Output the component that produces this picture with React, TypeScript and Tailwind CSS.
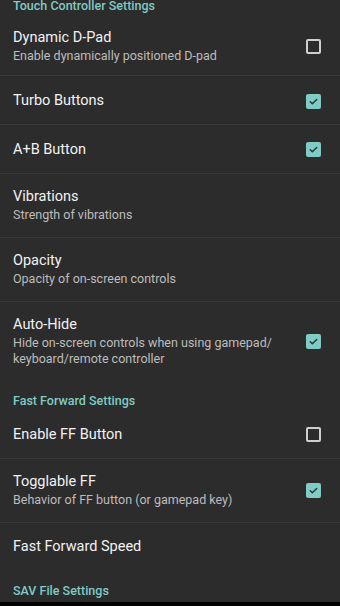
import React from "react";

const font = { fontFamily: "Roboto, 'Noto Sans', sans-serif" };

function Check({ checked }: { checked: boolean }) {
  if (checked) {
    return (
      <div className="w-[15px] h-[15px] rounded-[2px] bg-[#80cbc4] flex items-center justify-center">
        <svg width="11" height="11" viewBox="0 0 24 24" fill="none">
          <path d="M5 12.5l4.5 4.5L19 7.5" stroke="#263238" strokeWidth="3" strokeLinecap="round" strokeLinejoin="round" />
        </svg>
      </div>
    );
  }
  return <div className="w-[15px] h-[15px] rounded-[2px] border-[2.5px] border-[#cfcfcf]" />;
}

function Header({ text, first }: { text: string; first?: boolean }) {
  return (
    <div className={first ? "h-[13px] px-[13px] flex items-end" : "pt-[13px] pb-[2px] px-[13px]"}>
      <div className="text-[12.5px] leading-[14px] font-medium text-[#80cbc4] whitespace-nowrap">{text}</div>
    </div>
  );
}

function Row({
  title,
  sub,
  check,
  h,
  divider = true,
}: {
  title: string;
  sub?: string[];
  check?: boolean;
  h: string;
  divider?: boolean;
}) {
  return (
    <div className={divider ? "border-b border-[#383838]" : ""}>
      <div className={`${h} flex items-center pl-[13px] pr-[19px]`}>
        <div className="flex-1 min-w-0">
          <div className="text-[14.5px] leading-[18px] text-[#f2f2f2]">{title}</div>
          {sub && (
            <div className="mt-[1px]">
              {sub.map((s) => (
                <div key={s} className="text-[12.5px] leading-[16px] text-[#bdbdbd] whitespace-nowrap">
                  {s}
                </div>
              ))}
            </div>
          )}
        </div>
        {check !== undefined && (
          <div className="ml-3 shrink-0">
            <Check checked={check} />
          </div>
        )}
      </div>
    </div>
  );
}

export default function App() {
  return (
    <div className="w-[340px] h-[606px] bg-black flex flex-col" style={font}>
      <div className="h-[602px] overflow-hidden bg-[#2c2c2c]">
        <Header text="Touch Controller Settings" first />
        <Row title="Dynamic D-Pad" sub={["Enable dynamically positioned D-pad"]} check={false} h="h-[62px] pt-[5px]" />
        <Row title="Turbo Buttons" check={true} h="h-[48px] pt-[2px]" />
        <Row title="A+B Button" check={true} h="h-[48px] pt-[1px]" />
        <Row title="Vibrations" sub={["Strength of vibrations"]} h="h-[63px]" />
        <Row title="Opacity" sub={["Opacity of on-screen controls"]} h="h-[63px]" />
        <Row
          title="Auto-Hide"
          sub={["Hide on-screen controls when using gamepad/", "keyboard/remote controller"]}
          check={true}
          h="h-[79px]"
          divider={false}
        />
        <Header text="Fast Forward Settings" />
        <Row title="Enable FF Button" check={false} h="h-[48px] pt-[1px]" />
        <Row title="Togglable FF" sub={["Behavior of FF button (or gamepad key)"]} check={true} h="h-[63px]" />
        <Row title="Fast Forward Speed" h="h-[48px]" divider={false} />
        <Header text="SAV File Settings" />
      </div>
      <div className="flex-1 bg-black" />
    </div>
  );
}
